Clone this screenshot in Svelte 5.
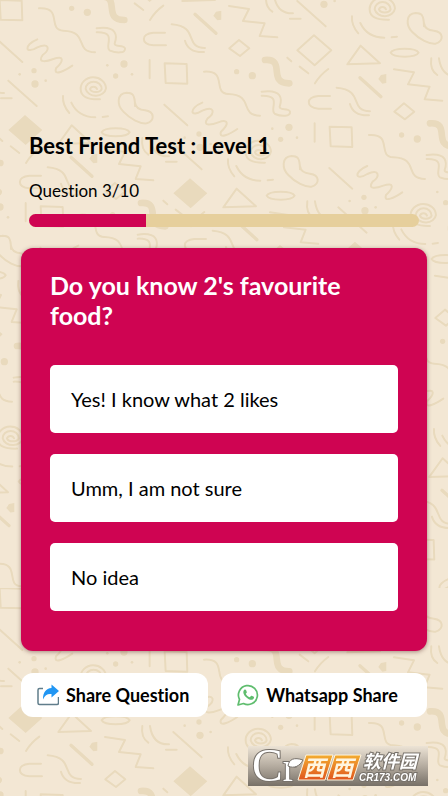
<script>

let question = 3
let questionCount = 10
let title = "Do you know 2's favourite food?"

let options = [
  'Yes! I know what 2 likes',
  'Umm, I am not sure',
  'No idea'
]

// every copy of the doodle group, in thirds of a pixel
let copies = []
for (let i = -4; i < 7; i++) {
  for (let j = -6; j < 5; j++) {
    copies.push({ x: i * 495 + j * 372, y: i * 190 - j * 429 })
  }
}

function outlined(copy) {
  return copy.x === 867 && copy.y === -239
}

</script>


<!--  background doodles   -->

<svg class="doodles" aria-hidden="true">
  <defs>
    <g id="doodle">
      <path d="M494 190 L560 192 L562 251 L497 249 Z" />
      <path d="M117 25 C190 20 140 90 190 92 C270 95 220 155 285 157" />
      <path d="M290 97 C355 95 310 140 330 152 C350 160 378 160 375 145 C370 133 343 143 344 130 C352 108 352 76 290 85" />
      <path d="M404 10 L430 30 M450 60 Q465 35 490 17" />
      <path d="M495 98 H460 C422 102 422 132 460 136 H498" />
      <path d="M515 73 C600 80 550 142 615 144 M555 122 Q565 158 612 156" />
      <path d="M112 118 C70 135 75 165 112 142 C150 125 150 150 128 165 C110 190 140 185 160 177 C195 165 190 185 168 205 C160 230 195 212 217 197" />
      <path d="M493 314 L562 376 M520 432 L605 508 M449 180 V235" />
      <path d="M300 298 Q242 300 242 267 A38 34 0 0 1 318 265 A31 26 0 0 1 257 267 A24 22 0 0 1 305 267 A18 12 0 0 1 270 267 A11 10 0 0 1 291 267" />
      <path d="M189 288 Q187 315 208 339 M214 308 Q235 352 286 352 M308 351 L324 349" />
      <path d="M405 318 C405 280 395 278 380 278 C350 280 350 315 370 335 C392 358 420 372 440 370 C465 362 465 335 435 331 Q408 330 405 308" />
      <path d="M1172 158 C1180 142 1248 142 1256 158 C1248 174 1180 174 1172 158 Z" />
      <path d="M1082 137 L1042 193 L1140 190 Z" />
      <path d="M687 18 L747 27 L729 63 L794 70 L779 108 L832 112" />
      <path d="M717 120 L748 145 L720 168 L688 145 Z" />
      <path d="M799 -15 Q794 20 817 35 M822 -15 Q830 42 879 40 M870 56 H902" />
      <path d="M862 173 L874 184" />
      <path class="thick" d="M300 -10 C365 -15 305 60 373 60" />
      <path class="medium" d="M585 43 L648 100" />
      <g class="solid">
        <path d="M664 32 L664 59 L652 61 L640 47 L648 35 Z" />
        <circle cx="215" cy="25" r="8" />
        <circle cx="262" cy="37" r="11" />
        <circle cx="102" cy="212" r="8" />
        <circle cx="105" cy="252" r="11" />
        <circle cx="59" cy="223" r="4" />
        <circle cx="137" cy="242" r="4" />
        <circle cx="372" cy="192" r="11" />
        <circle cx="347" cy="228" r="8" />
        <circle cx="322" cy="196" r="4" />
        <circle cx="396" cy="223" r="4" />
      </g>
    </g>
    <pattern id="tile" width="588" height="588" patternUnits="userSpaceOnUse">
      <g class="ink" transform="scale(0.3333)">
        {#each copies as copy}
          <g transform="translate({copy.x} {copy.y})">
            <use href="#doodle" />
            <path class:solid={!outlined(copy)} d="M75 345 L127 390 L77 435 L25 390 Z" />
          </g>
        {/each}
      </g>
    </pattern>
  </defs>
  <rect width="100%" height="100%" fill="url(#tile)" />
</svg>


<!--  main   -->

<main>
  <header>
    <h1>Best Friend Test : Level 1</h1>
    <label for="progress">Question {question}/{questionCount}</label>
    <progress id="progress" value={question} max={questionCount}></progress>
  </header>

  <section class="card">
    <h2>{title}</h2>
    <div class="options">
      {#each options as option}
        <button>{option}</button>
      {/each}
    </div>
  </section>

  <div class="share">
    <button>
      <svg width="22" height="22" viewBox="0 0 22 22" aria-hidden="true">
        <path d="M6 4.500 H2.500 Q1 4.500 1 6 V19 Q1 20.500 2.500 20.500 H20 Q21.500 20.500 21.500 19 V13" fill="none" stroke="#607d8b" stroke-width="1.500" />
        <path d="M14.500 0.500 L22 7 L14.500 13.500 V10 C10.500 9.500 8 11 6 15.500 C6 8 9 4.500 14.500 4 Z" fill="#2196f3" />
      </svg>
      Share Question
    </button>
    <button>
      <svg width="22" height="22" viewBox="0 0 22 22" aria-hidden="true">
        <path d="M1 21 L2.500 15.500 A9.500 9.500 0 1 1 6.500 19.500 Z" fill="none" stroke="#5fbd6e" stroke-width="1.700" stroke-linejoin="round" />
        <path d="M7.300 5.700 C8 5.200 8.700 5.400 9 6 L9.800 8 C10 8.600 9.300 9.200 8.800 9.700 C9.700 11.400 11 12.600 12.700 13.300 L14 11.900 Q14.300 11.600 14.800 11.800 L16.800 12.800 C17.500 13.200 16.800 15 15.700 15.500 C13 16.600 9 13.800 7.200 10.900 C5.800 8.700 6.200 6.700 7.300 5.700 Z" fill="#5fbd6e" />
      </svg>
      Whatsapp Share
    </button>
  </div>
</main>


<!--  site badge   -->

<svg class="badge" width="180" height="40" viewBox="0 0 180 40" role="img" aria-label="CR173.COM">
  <defs>
    <linearGradient id="steel" x1="0" y1="0" x2="0" y2="1">
      <stop offset="0" stop-color="#ece3d5" />
      <stop offset="0.500" stop-color="#b5aca0" />
      <stop offset="1" stop-color="#777067" />
    </linearGradient>
    <linearGradient id="orange" x1="0" y1="0" x2="0" y2="1">
      <stop offset="0" stop-color="#f3ad30" />
      <stop offset="1" stop-color="#e0551d" />
    </linearGradient>
  </defs>
  <rect width="180" height="40" fill="url(#steel)" />
  <text class="lettering" x="4" y="35">C<tspan class="small">r</tspan></text>
  <path d="M40 20 C41 13 46 11 55 14 C52 20 46 23 40 20 Z" fill="#fff" stroke="#77716a" />
  <path d="M58 9 H85 L77 34 H50 Z M87 9 H113 L105 34 H79 Z" fill="url(#orange)" stroke="#fff5df" stroke-width="1" />
  <text class="west" x="55" y="30">西<tspan dx="6">西</tspan></text>
  <text class="soft" x="115" y="22">软件园</text>
  <text class="domain" x="111" y="35">CR173.COM</text>
</svg>

<!--         -->


<style>

  :global(body) {
    background: #f3e7d4;
  }

  .doodles {
    position: absolute;
    inset: 0;
    width: 100%;
    height: 100%;
    z-index: -1;
  }

  .ink {
    fill: none;
    stroke: #e9dabd;
    stroke-width: 6;
    stroke-linecap: round;
    stroke-linejoin: round;
  }

  .thick {
    stroke-width: 20;
  }

  .medium {
    stroke-width: 10;
  }

  .solid {
    fill: #e9dabd;
    stroke: none;
  }

  main {
    box-sizing: border-box;
    min-height: 100vh;
    padding: 130px 21px 20px;
    font-family: Lato, "Liberation Sans", sans-serif;
    font-variant-ligatures: none;
    color: #000;
  }

  header {
    display: flex;
    flex-direction: column;
    padding: 0 8px;
  }

  h1 {
    margin: 0 0 16px;
    font-size: 22px;
    line-height: 32px;
    font-weight: 700;
  }

  label {
    font-size: 17px;
    line-height: 26px;
  }

  progress {
    appearance: none;
    width: 100%;
    height: 13px;
    margin-top: 10px;
    border: none;
    border-radius: 7px;
    overflow: hidden;
    background: #e6cf9c;
  }

  progress::-webkit-progress-bar {
    background: #e6cf9c;
  }

  progress::-webkit-progress-value {
    background: #cf0452;
  }

  .card {
    margin-top: 21px;
    padding: 22px 29px 40px;
    border-radius: 12px;
    background: #cf0452;
    box-shadow: 0 1px 4px rgba(90, 40, 40, 0.5);
  }

  h2 {
    margin: 0 0 35px;
    padding-right: 40px;
    color: white;
    font-size: 25px;
    line-height: 30px;
    font-weight: 700;
  }

  button {
    border: none;
    background: white;
    color: #000;
    font-family: inherit;
    font-variant-ligatures: none;
    cursor: pointer;
  }

  .options {
    display: grid;
    gap: 21px;
  }

  .options button {
    min-height: 68px;
    padding: 0 21px;
    border-radius: 5px;
    font-size: 20px;
    text-align: left;
  }

  .share {
    display: grid;
    grid-template-columns: 10fr 11fr;
    gap: 13px;
    margin-top: 22px;
  }

  .share button {
    display: flex;
    align-items: center;
    gap: 7px;
    min-height: 44px;
    padding: 0 12px 0 16px;
    border-radius: 12px;
    font-size: 18px;
    font-weight: 700;
    white-space: nowrap;
  }

  .badge {
    position: fixed;
    right: 20px;
    bottom: 10px;
    overflow: visible;
  }

  .lettering {
    fill: #fff;
    stroke: #77716a;
    stroke-width: 2;
    paint-order: stroke;
    font: 400 46px "Liberation Serif", serif;
  }

  .small {
    font-size: 40px;
  }

  .west {
    fill: #fff5df;
    font: italic 700 22px "Noto Sans CJK SC", sans-serif;
  }

  .soft {
    fill: #fff;
    stroke: #77716a;
    stroke-width: 2;
    paint-order: stroke;
    font: italic 700 18px "Noto Sans CJK SC", sans-serif;
  }

  .domain {
    fill: #fff;
    stroke: #77716a;
    stroke-width: 2;
    paint-order: stroke;
    font: italic 700 10px "Liberation Sans", sans-serif;
  }

</style>
